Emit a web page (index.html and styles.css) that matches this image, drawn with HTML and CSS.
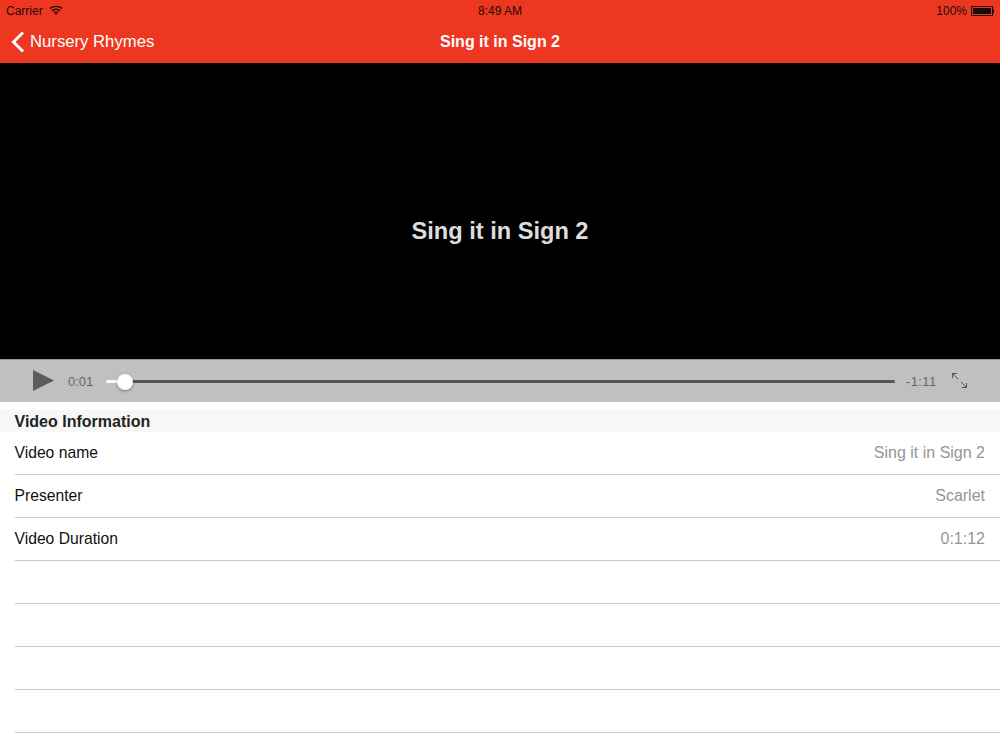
FILE: index.html
```html
<!DOCTYPE html>
<html lang="en">
<head>
<meta charset="utf-8">
<title>Sing it in Sign 2</title>
<link rel="stylesheet" href="styles.css">
</head>
<body>
<header class="top">
  <div class="status">
    <div class="status-left">
      <span>Carrier</span>
      <svg class="wifi" width="14" height="10" viewBox="0 0 14 10"><path d="M1 3.600C4.400.6 9.600.6 13 3.600M3 5.700c2.300-2 5.700-2 8 0M5 7.700c1.200-1 2.800-1 4 0" fill="none" stroke="#1c0b07" stroke-width="1.300"/><path d="M7 10 5.800 8.700c.7-.5 1.700-.5 2.400 0z" fill="#1c0b07"/></svg>
    </div>
    <div class="status-time">8:49 AM</div>
    <div class="status-right">
      <span>100%</span>
      <span class="battery"><span class="battery-fill"></span></span>
      <span class="battery-tip"></span>
    </div>
  </div>
  <nav class="nav">
    <a class="back">
      <svg width="14" height="22" viewBox="0 0 14 22"><path d="M12 1.500 2.500 11l9.500 9.500" fill="none" stroke="#fff" stroke-width="3"/></svg>
      <span>Nursery Rhymes</span>
    </a>
    <h1 class="nav-title">Sing it in Sign 2</h1>
  </nav>
</header>
<section class="video"><span class="video-title">Sing it in Sign 2</span></section>
<section class="controls">
  <svg class="play" width="21" height="21" viewBox="0 0 21 21"><path d="M0 0 21 10.500 0 21z" fill="#5c5c5c"/></svg>
  <span class="time elapsed">0:01</span>
  <div class="track"><span class="track-done"></span><span class="thumb"></span><span class="track-rest"></span></div>
  <span class="time remaining">-1:11</span>
  <svg class="expand" width="15" height="15" viewBox="0 0 15 15"><path d="M.5.500 6 6M.5.500v4.500M.5.500h4.500M14.500 14.500 9 9M14.500 14.500v-4.500M14.500 14.500h-4.500" fill="none" stroke="#555" stroke-width="1"/></svg>
</section>
<main class="info">
  <h2 class="info-head">Video Information</h2>
  <div class="row"><span>Video name</span><span class="value">Sing it in Sign 2</span></div>
  <div class="row"><span>Presenter</span><span class="value">Scarlet</span></div>
  <div class="row"><span>Video Duration</span><span class="value">0:1:12</span></div>
  <div class="row"></div>
  <div class="row"></div>
  <div class="row"></div>
  <div class="row"></div>
</main>
</body>
</html>
```
FILE: styles.css
```css
* { box-sizing: border-box; }
html, body { margin: 0; padding: 0; }
body {
  width: 1000px;
  height: 750px;
  overflow: hidden;
  background: #fff;
  font-family: "Liberation Sans", Arial, sans-serif;
  color: #111;
}
.top { height: 63px; background: #ee3721; }
.status {
  height: 20px;
  padding: 1px 6px 0;
  display: grid;
  grid-template-columns: 1fr auto 1fr;
  align-items: center;
  font-size: 12px;
  color: #1c0b07;
}
.status-left { display: flex; align-items: center; gap: 6px; }
.wifi { margin-top: -2px; }
.status-right { display: flex; align-items: center; justify-content: flex-end; gap: 4px; }
.battery {
  width: 22px;
  height: 10px;
  border: 1px solid #1c0b07;
  padding: 1px;
  display: flex;
  margin-right: -4px;
}
.battery-fill { flex: 1; background: #1c0b07; }
.battery-tip { width: 1px; height: 4px; background: #1c0b07; }
.nav {
  height: 43px;
  display: grid;
  grid-template-columns: 1fr auto 1fr;
  align-items: center;
  padding: 0 11px;
  color: #fff;
}
.back { grid-column: 1; grid-row: 1; display: flex; align-items: center; gap: 5px; font-size: 16.7px; }
.nav-title { grid-column: 2; grid-row: 1; margin: 0; font-size: 16px; font-weight: 700; }
.video {
  height: 296px;
  background: #000;
  display: flex;
  align-items: center;
  justify-content: center;
  padding-top: 40px;
}
.video-title {
  font-size: 23.6px;
  font-weight: 700;
  color: #ddd;
}
.controls {
  height: 43px;
  background: #bfc0c1;
  border-top: 1px solid #999;
  display: flex;
  align-items: center;
  padding: 1px 0 0 33px;
}
.play { flex: none; margin-top: -2px; }
.time { font-size: 13px; color: #666; margin-top: -1px; }
.elapsed { margin-left: 14px; width: 38px; }
.track { width: 789px; display: flex; align-items: center; }
.track-done { width: 13px; height: 3px; background: #fff; border-radius: 2px 0 0 2px; }
.thumb {
  width: 16px;
  height: 16px;
  margin: 0 -2px;
  border-radius: 50%;
  background: #fff;
  box-shadow: 0 1px 3px rgba(0, 0, 0, .4);
  position: relative;
}
.track-rest { flex: 1; height: 3px; background: #555; border-radius: 0 2px 2px 0; }
.remaining { margin-left: 11px; width: 46px; letter-spacing: .4px; }
.expand { flex: none; margin-top: -2px; }
.info { padding-top: 8px; }
.info-head {
  margin: 0;
  height: 22px;
  padding-left: 14.500px;
  background: #f7f7f7;
  font-size: 16px;
  font-weight: 700;
  line-height: 23px;
  color: #222;
}
.row {
  height: 43px;
  margin-left: 14.500px;
  padding: 0 15px 0 0;
  border-bottom: 1px solid #c8c7cc;
  display: flex;
  align-items: center;
  justify-content: space-between;
  font-size: 15.7px;
  color: #111;
}
.value { color: #959595; font-size: 16px; }
```
